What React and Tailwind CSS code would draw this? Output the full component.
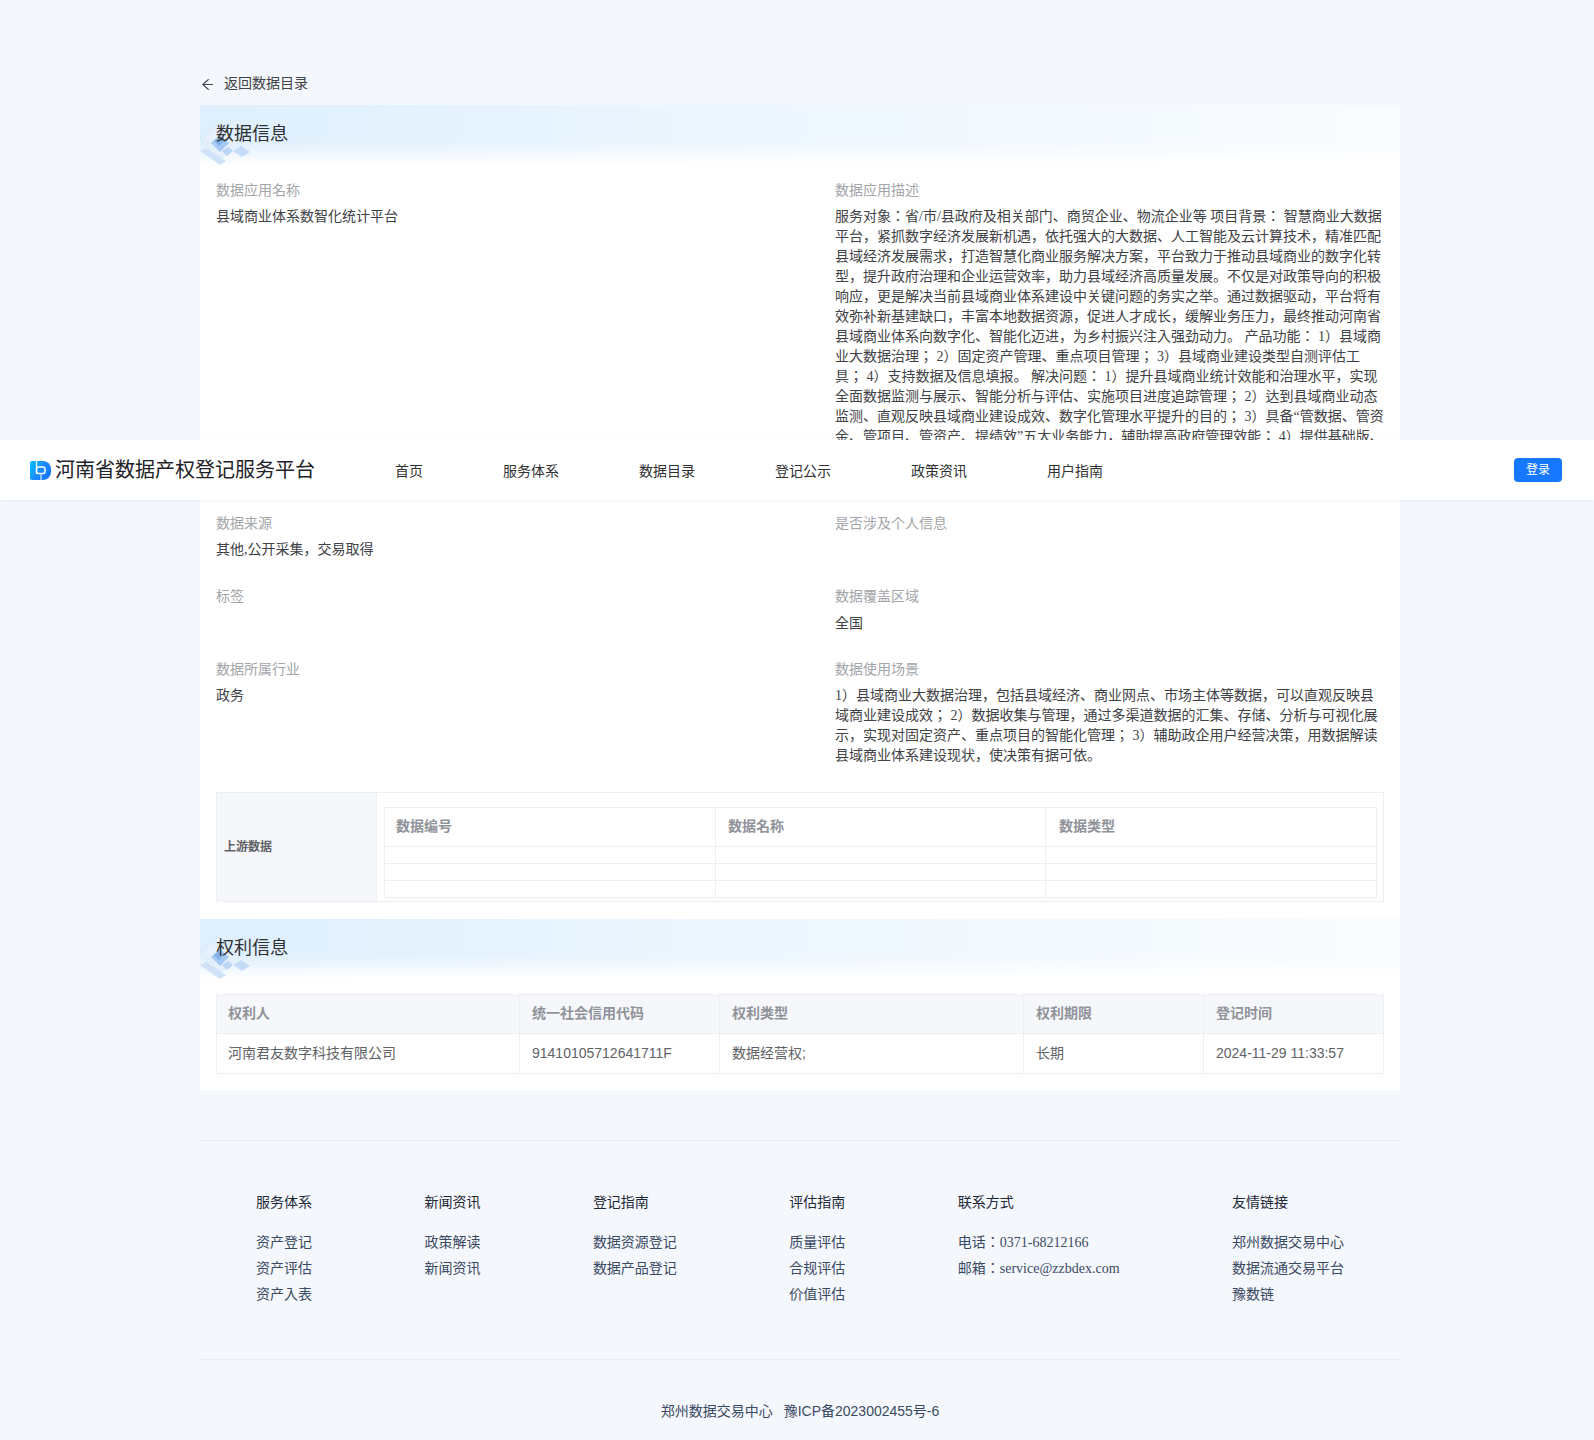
import React from "react";
import { AiOutlineArrowLeft } from "react-icons/ai";

const SERIF = "font-['Liberation_Serif','Noto_Sans_CJK_JP',serif]";
const SANS = "font-['Liberation_Sans','Noto_Sans_CJK_JP',sans-serif]";

const desc =
  "服务对象：省/市/县政府及相关部门、商贸企业、物流企业等 项目背景： 智慧商业大数据平台，紧抓数字经济发展新机遇，依托强大的大数据、人工智能及云计算技术，精准匹配县域经济发展需求，打造智慧化商业服务解决方案，平台致力于推动县域商业的数字化转型，提升政府治理和企业运营效率，助力县域经济高质量发展。不仅是对政策导向的积极响应，更是解决当前县域商业体系建设中关键问题的务实之举。通过数据驱动，平台将有效弥补新基建缺口，丰富本地数据资源，促进人才成长，缓解业务压力，最终推动河南省县域商业体系向数字化、智能化迈进，为乡村振兴注入强劲动力。 产品功能： 1）县域商业大数据治理； 2）固定资产管理、重点项目管理； 3）县域商业建设类型自测评估工具； 4）支持数据及信息填报。 解决问题： 1）提升县域商业统计效能和治理水平，实现全面数据监测与展示、智能分析与评估、实施项目进度追踪管理； 2）达到县域商业动态监测、直观反映县域商业建设成效、数字化管理水平提升的目的； 3）具备“管数据、管资金、管项目、管资产、提绩效”五大业务能力，辅助提高政府管理效能； 4）提供基础版、";

const scene =
  "1）县域商业大数据治理，包括县域经济、商业网点、市场主体等数据，可以直观反映县域商业建设成效； 2）数据收集与管理，通过多渠道数据的汇集、存储、分析与可视化展示，实现对固定资产、重点项目的智能化管理； 3）辅助政企用户经营决策，用数据解读县域商业体系建设现状，使决策有据可依。";

const navItems = ["首页", "服务体系", "数据目录", "登记公示", "政策资讯", "用户指南"];

const footerCols = [
  { title: "服务体系", links: ["资产登记", "资产评估", "资产入表"] },
  { title: "新闻资讯", links: ["政策解读", "新闻资讯"] },
  { title: "登记指南", links: ["数据资源登记", "数据产品登记"] },
  { title: "评估指南", links: ["质量评估", "合规评估", "价值评估"] },
  { title: "联系方式", links: ["电话：0371-68212166", "邮箱：service@zzbdex.com"] },
  { title: "友情链接", links: ["郑州数据交易中心", "数据流通交易平台", "豫数链"] },
];

const Logo = () => (
  <svg width="21" height="21" viewBox="0 0 21 21" className="shrink-0">
    <defs>
      <linearGradient id="logoFill" x1="0" y1="0" x2="1" y2="0.6">
        <stop offset="0" stopColor="#08c4f6" />
        <stop offset="0.55" stopColor="#1a8cff" />
        <stop offset="1" stopColor="#1677ff" />
      </linearGradient>
    </defs>
    <path d="M2 1h11a8 8 0 0 1 8 8v3a8 8 0 0 1-8 8H2a2 2 0 0 1-2-2V3a2 2 0 0 1 2-2z" fill="url(#logoFill)" />
    <path d="M6.5 1v13" stroke="#fff" strokeWidth="1.3" />
    <rect x="6.5" y="7" width="8.5" height="6.5" rx="2" fill="none" stroke="#fff" strokeWidth="1.5" />
    <path d="M11 13.5V20" stroke="#fff" strokeWidth="1" />
  </svg>
);

// little diamond pattern behind the section titles
const HeaderDecor = () => (
  <svg width="52" height="44" viewBox="0 0 52 44" className="absolute left-0 bottom-0 blur-[0.5px]">
    <path d="M0 16 L18 2 L40 20 L18 40 Z" fill="#e6f1fc" stroke="#cfe2f7" strokeWidth="0.8" />
    <path d="M4 16 L18 6 L36 20 L18 36 Z" fill="none" stroke="#d5e6f8" strokeWidth="0.7" />
    <path d="M11 22 L20 14 L29 22 L20 31 Z" fill="#a6caf3" />
    <path d="M14 20 L19 16 L24 20 L19 25 Z" fill="#82b2ec" />
    <path d="M22 30 L28 26 L33 30 L27 35 Z" fill="#bcd7f5" />
    <path d="M33 30 L41 25 L50 31 L42 36 Z" fill="#c6dcf6" />
    <path d="M0 30 L6 27 L26 40 L20 44 Z" fill="#d0e2f8" />
  </svg>
);

const SectionHeader = ({ title }) => (
  <div className="relative h-[60px] bg-[linear-gradient(to_bottom,rgba(255,255,255,0)_62%,#ffffff_100%),linear-gradient(to_right,#deeffd,#eef7ff_50%,#f9fcff)]">
    <HeaderDecor />
    <h2 className="relative pl-4 pt-[17px] text-lg leading-6 font-normal text-[#303133]">{title}</h2>
  </div>
);

const Field = ({ label, children, className = "" }) => (
  <div className={className}>
    <div className="h-[21px] pt-px text-sm leading-5 text-[#a3a5a9]">{label}</div>
    <div className="mt-[6px] min-h-5 text-sm leading-5 text-[#3f4246]">{children}</div>
  </div>
);

const Row = ({ children }) => <div className="flex mb-[26px]">{children}</div>;

const UpstreamTable = () => (
  <div className="flex h-[110px] border border-[#eceef4]">
    <div className="flex w-[160px] shrink-0 items-center border-r border-[#eceef4] bg-[#f5f7fb] pl-[7px] text-xs font-bold text-[#606266]">
      上游数据
    </div>
    <div className="flex-1 px-[7px] pt-[14px]">
      <table className="w-full table-fixed border-collapse border border-[#eceef4] text-sm">
        <colgroup>
          <col className="w-[331px]" />
          <col className="w-[330px]" />
          <col className="w-[331px]" />
        </colgroup>
        <thead>
          <tr className="h-[39px] text-left font-bold text-[#909399]">
            <th className="border border-[#eceef4] pl-[11px]">数据编号</th>
            <th className="border border-[#eceef4] pl-3">数据名称</th>
            <th className="border border-[#eceef4] pl-[13px]">数据类型</th>
          </tr>
        </thead>
        <tbody>
          {[0, 1, 2].map((r) => (
            <tr key={r} className="h-[17px]">
              <td className="border border-[#eceef4]"></td>
              <td className="border border-[#eceef4]"></td>
              <td className="border border-[#eceef4]"></td>
            </tr>
          ))}
        </tbody>
      </table>
    </div>
  </div>
);

const RightsTable = () => (
  <table className={`w-full table-fixed border-collapse border border-[#eceef4] text-sm ${SANS}`}>
    <colgroup>
      <col className="w-[303px]" />
      <col className="w-[200px]" />
      <col className="w-[304px]" />
      <col className="w-[180px]" />
      <col className="w-[180px]" />
    </colgroup>
    <thead>
      <tr className="h-[39px] bg-[#f5f7fb]">
        {["权利人", "统一社会信用代码", "权利类型", "权利期限", "登记时间"].map((h) => (
          <th key={h} className="border border-[#eceef4] px-3 first:pl-[11px] pb-0.5 text-left font-bold text-[#909399]">{h}</th>
        ))}
      </tr>
    </thead>
    <tbody>
      <tr className="h-10 text-[#606266]">
        {["河南君友数字科技有限公司", "91410105712641711F", "数据经营权;", "长期", "2024-11-29 11:33:57"].map((c) => (
          <td key={c} className="border border-[#eceef4] px-3 first:pl-[11px] pb-0.5">{c}</td>
        ))}
      </tr>
    </tbody>
  </table>
);

const Footer = () => (
  <footer className="mt-[50px]">
    <div className="h-[219px] border-t border-[#e3ebf6] pt-[52px]">
      <div className="flex justify-between px-14">
        {footerCols.map((col) => (
          <div key={col.title}>
            <div className="mb-[17px] h-5 text-sm leading-5 text-[#1f2937]">{col.title}</div>
            {col.links.map((l) => (
              <div key={l} className="h-[26px] whitespace-nowrap text-sm leading-[26px] text-[#3b4a63]">{l}</div>
            ))}
          </div>
        ))}
      </div>
    </div>
    <div className={`border-t border-[#e6ebf2] pt-[41px] text-center text-sm leading-5 text-[#3b4a63] ${SANS}`}>
      郑州数据交易中心<span className="ml-[11px]">豫ICP备2023002455号-6</span>
    </div>
  </footer>
);

export default function App() {
  return (
    <div className={`relative h-[1440px] overflow-hidden bg-[#f4f7fc] ${SERIF}`}>
      <main className="ml-[200px] w-[1200px] pt-[73px]">
        <div className="mb-[10px] flex h-[22px] items-center text-sm text-[#3f4246]">
          <AiOutlineArrowLeft className="mr-[9px] text-[15px]" />
          返回数据目录
        </div>

        <section className="bg-white pb-4">
          <SectionHeader title="数据信息" />
          <div className="px-4 pt-[15px]">
            <Row>
              <Field label="数据应用名称" className="w-[619px]">县域商业体系数智化统计平台</Field>
              <Field label="数据应用描述" className="w-[549px]">
                <div className="h-[280px] overflow-hidden">{desc}</div>
              </Field>
            </Row>
            <Row>
              <Field label="数据来源" className="w-[619px]">其他,公开采集，交易取得</Field>
              <Field label="是否涉及个人信息" className="w-[549px]"></Field>
            </Row>
            <Row>
              <Field label="标签" className="w-[619px]"></Field>
              <Field label="数据覆盖区域" className="w-[549px]"><div className="h-5 pt-px">全国</div></Field>
            </Row>
            <Row>
              <Field label="数据所属行业" className="w-[619px]">政务</Field>
              <Field label="数据使用场景" className="w-[549px]">{scene}</Field>
            </Row>
            <UpstreamTable />
          </div>

          <div className="mt-[17px]">
            <SectionHeader title="权利信息" />
          </div>
          <div className="px-4 pt-[15px]">
            <RightsTable />
          </div>
        </section>

        <Footer />
      </main>

      {/* sticky header, caught mid-page in the capture */}
      <header className="absolute left-0 right-0 top-[440px] flex h-[60px] items-center bg-white pl-[30px] pr-8 shadow-[0_1px_4px_rgba(0,0,0,0.05)]">
        <Logo />
        <span className="ml-[4px] text-[20px] text-[#1f2329]">河南省数据产权登记服务平台</span>
        <nav className="ml-20 mt-[4px] flex gap-20 text-sm text-[#303133]">
          {navItems.map((n) => (
            <span key={n}>{n}</span>
          ))}
        </nav>
        <button className="ml-auto h-6 w-12 rounded-[4px] bg-[#1677ff] text-xs text-white">登录</button>
      </header>
    </div>
  );
}
